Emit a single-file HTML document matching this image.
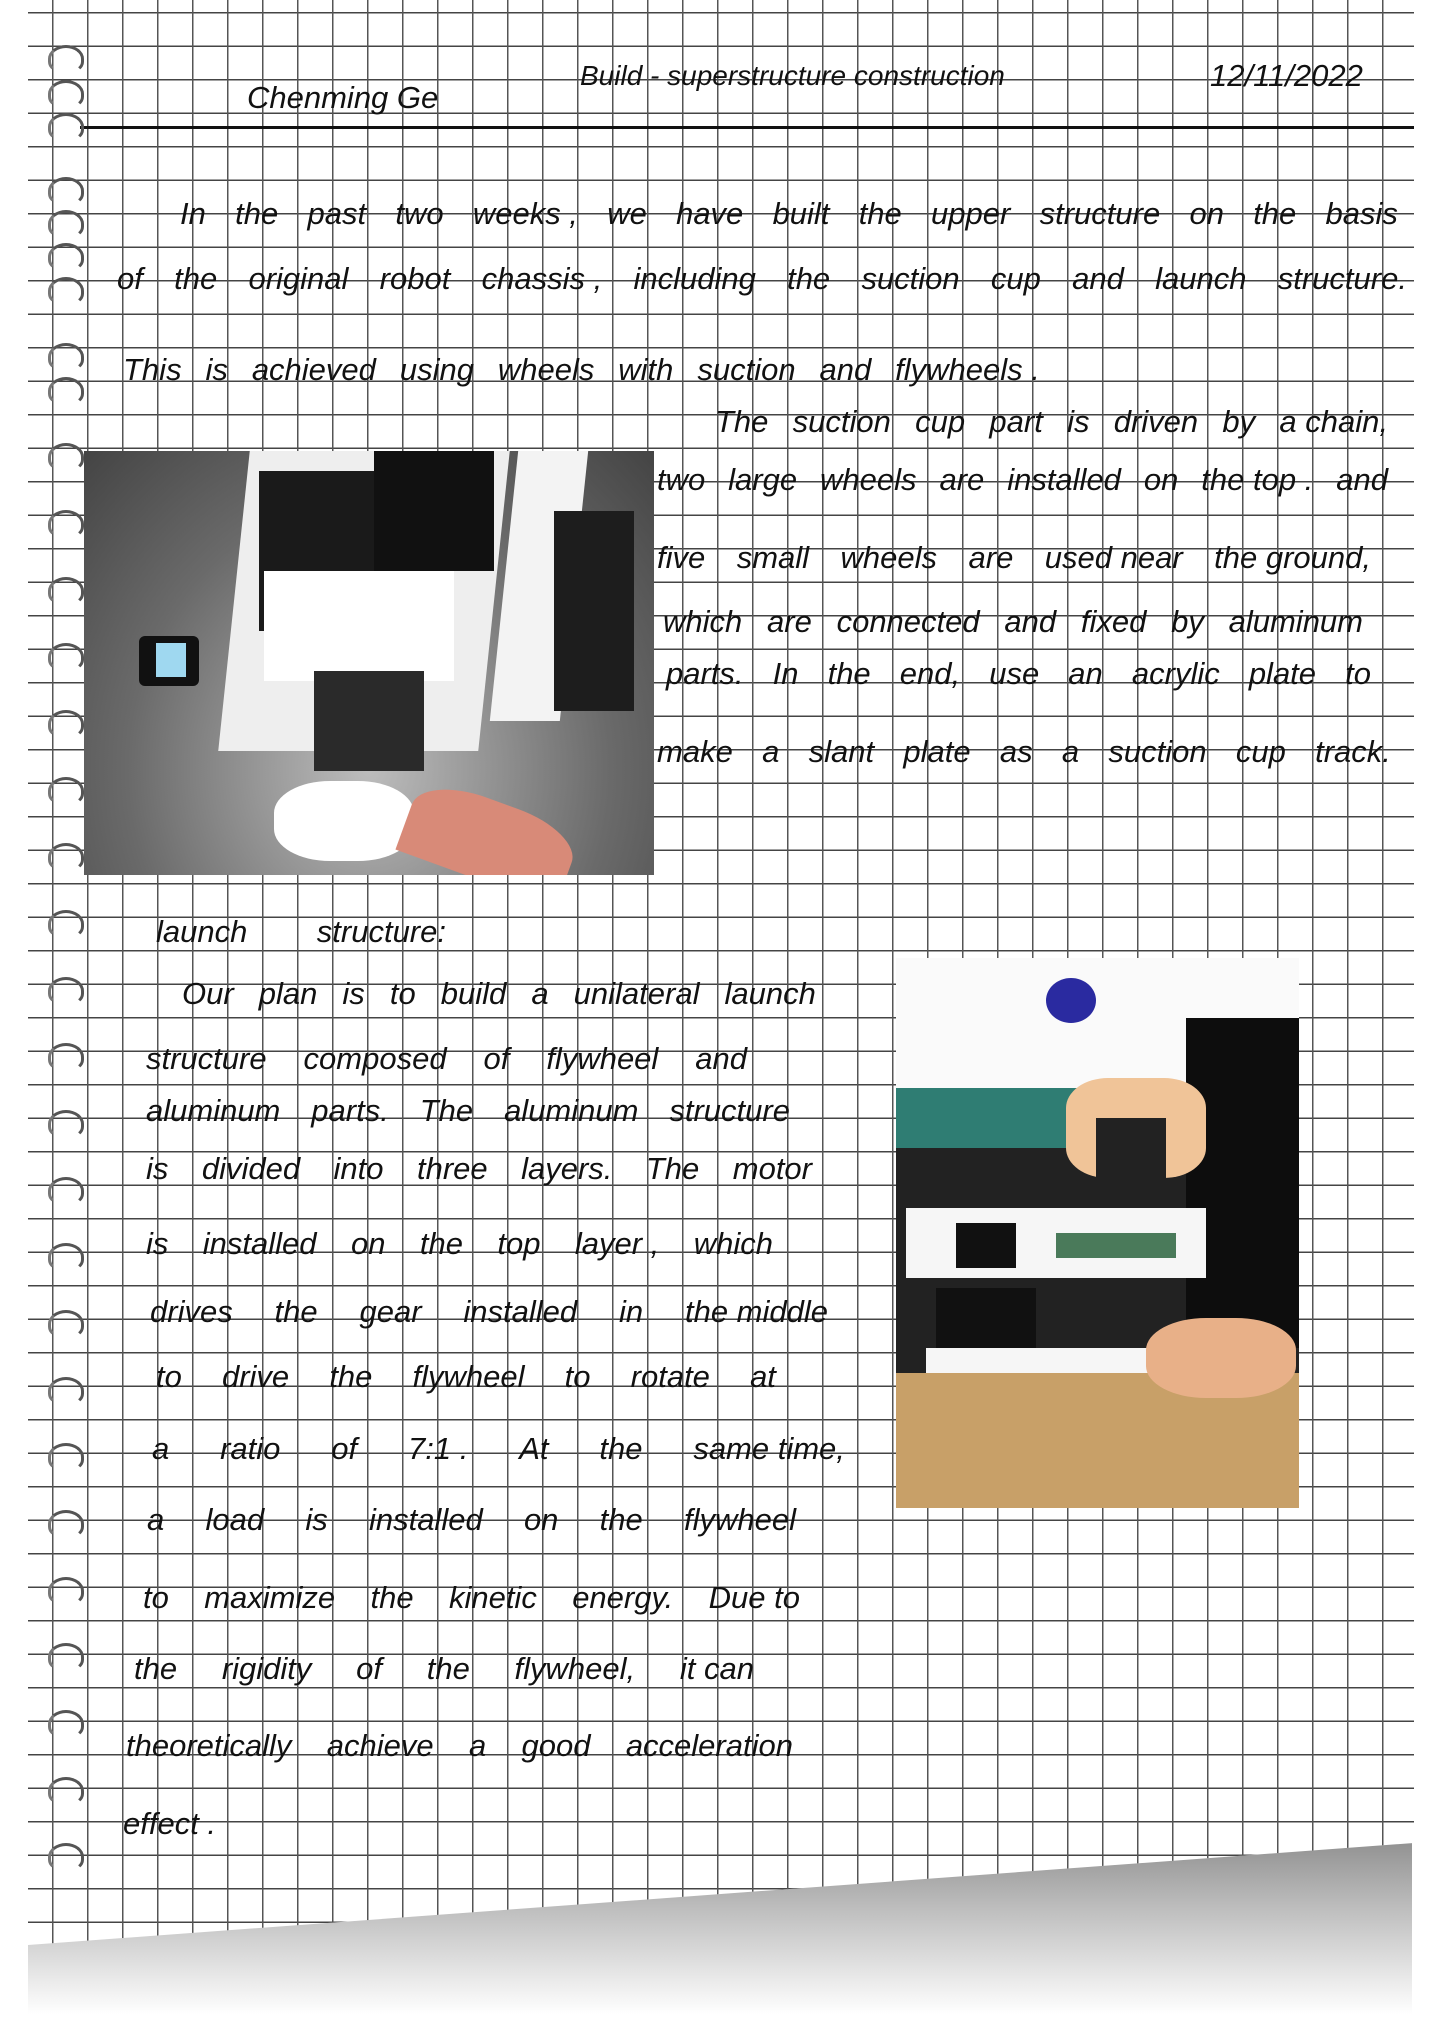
<!DOCTYPE html>
<html><head><meta charset="utf-8"><style>
html,body{margin:0;padding:0;background:#fff;}
body{width:1430px;height:2024px;position:relative;overflow:hidden;font-family:"Liberation Sans",sans-serif;}
#shadow{position:absolute;left:28px;top:1830px;width:1384px;height:194px;background:linear-gradient(#8a8a8a,#bdbdbd 40%,#fff 95%);}
#paper{position:absolute;left:28px;top:0;width:1386px;height:1945px;background-color:#fff;
background-image:repeating-linear-gradient(90deg,transparent 0 24px,#555 24px 25.4px,transparent 25.4px 35px),
repeating-linear-gradient(180deg,transparent 0 12px,#444 12px 13.6px,transparent 13.6px 33.5px);
clip-path:polygon(0 0,100% 0,100% 1843px,0 1945px);}
.hl{position:absolute;left:80px;top:126px;width:1334px;height:3px;background:#111;}
.t{position:absolute;display:flex;justify-content:space-between;font-size:31px;color:#111;white-space:nowrap;font-style:italic;line-height:1;}
.ring{position:absolute;left:48px;width:30px;height:22px;border:3px solid #555;border-radius:50% 50% 40% 40%;border-bottom-color:transparent;border-left-color:#777;}
.p1{position:absolute;left:84px;top:451px;width:570px;height:424px;background:radial-gradient(ellipse at 50% 75%,#bdbdbd,#6a6a6a 60%,#444);overflow:hidden;}
.p2{position:absolute;left:896px;top:958px;width:403px;height:550px;background:#222;overflow:hidden;}
</style></head><body>
<div id="shadow"></div>
<div id="paper"></div>
<div class="hl"></div>

<div class="ring" style="top:45px"></div><div class="ring" style="top:80px"></div><div class="ring" style="top:113px"></div>
<div class="ring" style="top:177px"></div><div class="ring" style="top:210px"></div><div class="ring" style="top:243px"></div>
<div class="ring" style="top:277px"></div><div class="ring" style="top:343px"></div><div class="ring" style="top:377px"></div>
<div class="ring" style="top:443px"></div><div class="ring" style="top:510px"></div><div class="ring" style="top:577px"></div>
<div class="ring" style="top:643px"></div><div class="ring" style="top:710px"></div><div class="ring" style="top:777px"></div>
<div class="ring" style="top:843px"></div><div class="ring" style="top:910px"></div><div class="ring" style="top:977px"></div>
<div class="ring" style="top:1043px"></div><div class="ring" style="top:1110px"></div><div class="ring" style="top:1177px"></div>
<div class="ring" style="top:1243px"></div><div class="ring" style="top:1310px"></div><div class="ring" style="top:1377px"></div>
<div class="ring" style="top:1443px"></div><div class="ring" style="top:1510px"></div><div class="ring" style="top:1577px"></div>
<div class="ring" style="top:1643px"></div><div class="ring" style="top:1710px"></div><div class="ring" style="top:1777px"></div>
<div class="ring" style="top:1843px"></div>

<div class="t" style="left:247px;top:82px;">Chenming Ge</div>
<div class="t" style="left:580px;top:62px;font-size:28px">Build - superstructure construction</div>
<div class="t" style="left:1210px;top:60px;">12/11/2022</div>

<div class="t" style="left:180px;top:198px;width:1218px"><span>In</span><span>the</span><span>past</span><span>two</span><span>weeks ,</span><span>we</span><span>have</span><span>built</span><span>the</span><span>upper</span><span>structure</span><span>on</span><span>the</span><span>basis</span></div>
<div class="t" style="left:117px;top:263px;width:1290px"><span>of</span><span>the</span><span>original</span><span>robot</span><span>chassis ,</span><span>including</span><span>the</span><span>suction</span><span>cup</span><span>and</span><span>launch</span><span>structure.</span></div>
<div class="t" style="left:123px;top:354px;width:917px"><span>This</span><span>is</span><span>achieved</span><span>using</span><span>wheels</span><span>with</span><span>suction</span><span>and</span><span>flywheels .</span></div>
<div class="t" style="left:715px;top:406px;width:673px"><span>The</span><span>suction</span><span>cup</span><span>part</span><span>is</span><span>driven</span><span>by</span><span>a chain,</span></div>
<div class="t" style="left:657px;top:464px;width:731px"><span>two</span><span>large</span><span>wheels</span><span>are</span><span>installed</span><span>on</span><span>the top .</span><span>and</span></div>
<div class="t" style="left:657px;top:542px;width:714px"><span>five</span><span>small</span><span>wheels</span><span>are</span><span>used near</span><span>the ground,</span></div>
<div class="t" style="left:663px;top:606px;width:700px"><span>which</span><span>are</span><span>connected</span><span>and</span><span>fixed</span><span>by</span><span>aluminum</span></div>
<div class="t" style="left:666px;top:658px;width:705px"><span>parts.</span><span>In</span><span>the</span><span>end,</span><span>use</span><span>an</span><span>acrylic</span><span>plate</span><span>to</span></div>
<div class="t" style="left:657px;top:736px;width:734px"><span>make</span><span>a</span><span>slant</span><span>plate</span><span>as</span><span>a</span><span>suction</span><span>cup</span><span>track.</span></div>

<div class="t" style="left:156px;top:916px;width:290px"><span>launch</span><span>structure:</span></div>
<div class="t" style="left:182px;top:978px;width:634px"><span>Our</span><span>plan</span><span>is</span><span>to</span><span>build</span><span>a</span><span>unilateral</span><span>launch</span></div>
<div class="t" style="left:146px;top:1043px;width:601px"><span>structure</span><span>composed</span><span>of</span><span>flywheel</span><span>and</span></div>
<div class="t" style="left:146px;top:1095px;width:644px"><span>aluminum</span><span>parts.</span><span>The</span><span>aluminum</span><span>structure</span></div>
<div class="t" style="left:146px;top:1153px;width:666px"><span>is</span><span>divided</span><span>into</span><span>three</span><span>layers.</span><span>The</span><span>motor</span></div>
<div class="t" style="left:146px;top:1228px;width:627px"><span>is</span><span>installed</span><span>on</span><span>the</span><span>top</span><span>layer ,</span><span>which</span></div>
<div class="t" style="left:150px;top:1296px;width:678px"><span>drives</span><span>the</span><span>gear</span><span>installed</span><span>in</span><span>the middle</span></div>
<div class="t" style="left:156px;top:1361px;width:620px"><span>to</span><span>drive</span><span>the</span><span>flywheel</span><span>to</span><span>rotate</span><span>at</span></div>
<div class="t" style="left:152px;top:1433px;width:693px"><span>a</span><span>ratio</span><span>of</span><span>7:1 .</span><span>At</span><span>the</span><span>same time,</span></div>
<div class="t" style="left:147px;top:1504px;width:649px"><span>a</span><span>load</span><span>is</span><span>installed</span><span>on</span><span>the</span><span>flywheel</span></div>
<div class="t" style="left:143px;top:1582px;width:657px"><span>to</span><span>maximize</span><span>the</span><span>kinetic</span><span>energy.</span><span>Due to</span></div>
<div class="t" style="left:134px;top:1653px;width:620px"><span>the</span><span>rigidity</span><span>of</span><span>the</span><span>flywheel,</span><span>it can</span></div>
<div class="t" style="left:126px;top:1730px;width:667px"><span>theoretically</span><span>achieve</span><span>a</span><span>good</span><span>acceleration</span></div>
<div class="t" style="left:123px;top:1808px;">effect .</div>

<div class="p1">
 <div style="position:absolute;left:150px;top:0;width:260px;height:300px;background:#eee;transform:skewX(-6deg);"></div>
 <div style="position:absolute;left:175px;top:20px;width:130px;height:160px;background:#1a1a1a;"></div>
 <div style="position:absolute;left:290px;top:0;width:120px;height:120px;background:#111;"></div>
 <div style="position:absolute;left:420px;top:0;width:70px;height:270px;background:#f3f3f3;transform:skewX(-6deg);"></div>
 <div style="position:absolute;left:470px;top:60px;width:80px;height:200px;background:#1d1d1d;"></div>
 <div style="position:absolute;left:180px;top:120px;width:190px;height:110px;background:#fff;"></div>
 <div style="position:absolute;left:230px;top:220px;width:110px;height:100px;background:#2a2a2a;"></div>
 <div style="position:absolute;left:55px;top:185px;width:60px;height:50px;background:#111;border-radius:6px;"></div>
 <div style="position:absolute;left:72px;top:192px;width:30px;height:34px;background:#9fd8f0;"></div>
 <div style="position:absolute;left:190px;top:330px;width:140px;height:80px;background:#fff;border-radius:40%;"></div>
 <div style="position:absolute;left:320px;top:350px;width:170px;height:80px;background:#d88a78;border-radius:40% 40% 0 0;transform:rotate(20deg);"></div>
</div>

<div class="p2">
 <div style="position:absolute;left:0;top:0;width:403px;height:130px;background:#fafafa;"></div>
 <div style="position:absolute;left:150px;top:20px;width:50px;height:45px;background:#2a2aa0;border-radius:50%;"></div>
 <div style="position:absolute;left:0;top:130px;width:330px;height:60px;background:#2f7d73;"></div>
 <div style="position:absolute;left:290px;top:60px;width:113px;height:330px;background:#0d0d0d;"></div>
 <div style="position:absolute;left:170px;top:120px;width:140px;height:100px;background:#f0c498;border-radius:30%;"></div>
 <div style="position:absolute;left:200px;top:160px;width:70px;height:60px;background:#222;"></div>
 <div style="position:absolute;left:10px;top:250px;width:300px;height:70px;background:#f6f6f6;"></div>
 <div style="position:absolute;left:60px;top:265px;width:60px;height:45px;background:#111;"></div>
 <div style="position:absolute;left:160px;top:275px;width:120px;height:25px;background:#4a7a5a;"></div>
 <div style="position:absolute;left:40px;top:330px;width:100px;height:60px;background:#111;"></div>
 <div style="position:absolute;left:30px;top:390px;width:280px;height:25px;background:#f6f6f6;"></div>
 <div style="position:absolute;left:0;top:415px;width:403px;height:135px;background:#c8a068;"></div>
 <div style="position:absolute;left:250px;top:360px;width:150px;height:80px;background:#e8b088;border-radius:40%;"></div>
</div>
</body></html>
